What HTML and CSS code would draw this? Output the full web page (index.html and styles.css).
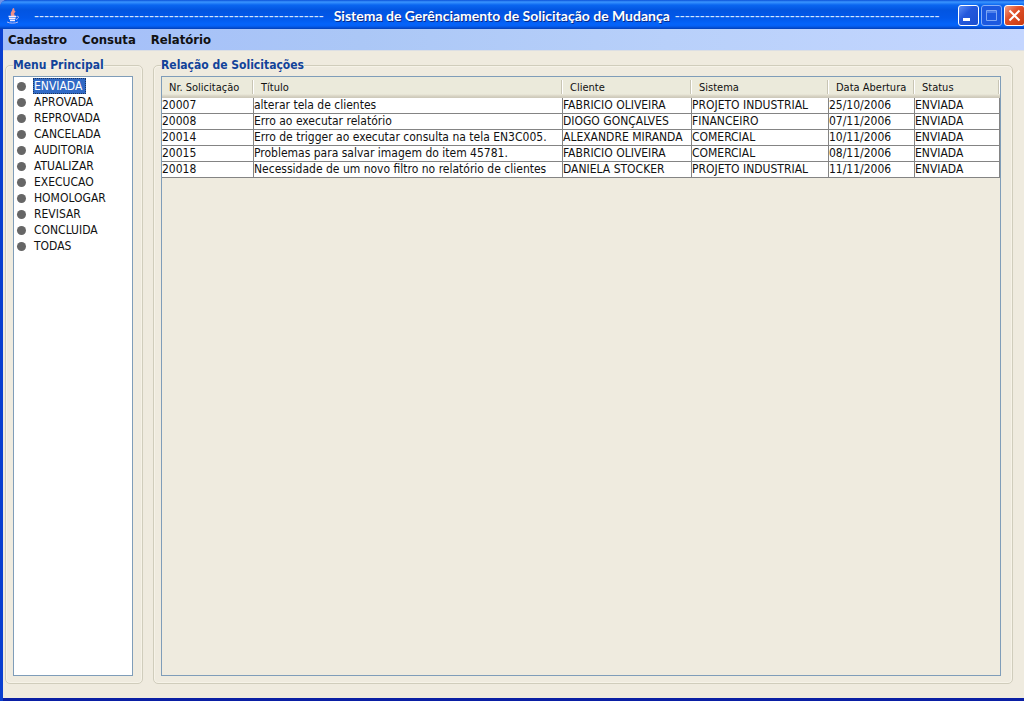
FILE: index.html
```html
<!DOCTYPE html>
<html lang="pt-BR">
<head>
<meta charset="utf-8">
<title>Sistema de Gerênciamento de Solicitação de Mudança</title>
<link rel="stylesheet" href="styles.css">
</head>
<body>
<div class="window">
  <header class="titlebar">
    <svg class="app-icon" viewBox="0 0 16 16" aria-hidden="true">
      <path d="M8 0.5C10 3 4.500 4.500 7.500 8M10 3C8 4.500 7.500 5.500 9 8" fill="none" stroke="#f09088" stroke-width="2"/>
      <path d="M3.500 8.500h7.500M4 10.500h6.500M5 12.500h5" stroke="#f4ecff" stroke-width="1.500" fill="none"/>
      <path d="M11.500 8.500c3-1 2.500 2-.5 3M2 14c3 1.500 8 1.500 11 0" stroke="#b9b8ee" fill="none"/>
    </svg>
    <span class="dashes dashes-left">----------------------------------------------------------</span>
    <h1 class="title">Sistema de Gerênciamento de Solicitação de Mudança</h1>
    <span class="dashes">-----------------------------------------------------</span>
    <div class="controls">
      <button class="control" type="button" aria-label="Minimizar"><svg viewBox="0 0 19 19"><path d="M4 12h7v3H4z" fill="#fff"/></svg></button>
      <button class="control control-dim" type="button" aria-label="Maximizar"><svg viewBox="0 0 19 19"><path d="M4.500 4.500h10v10h-10zM4 6h11" fill="none" stroke="#7fa8f5"/></svg></button>
      <button class="control control-close" type="button" aria-label="Fechar"><svg viewBox="0 0 19 19"><path d="M4.500 4.500l10 10M14.500 4.500l-10 10" stroke="#fff" stroke-width="2"/></svg></button>
    </div>
  </header>
  <div class="frame">
    <nav class="menubar">
      <button class="menu" type="button">Cadastro</button>
      <button class="menu" type="button">Consuta</button>
      <button class="menu" type="button">Relatório</button>
    </nav>
    <main class="content">
      <fieldset class="group group-menu">
        <legend class="group-title">Menu Principal</legend>
        <ul class="tree">
          <li class="node"><button class="node-label selected" type="button">ENVIADA</button></li>
          <li class="node"><button class="node-label" type="button">APROVADA</button></li>
          <li class="node"><button class="node-label" type="button">REPROVADA</button></li>
          <li class="node"><button class="node-label" type="button">CANCELADA</button></li>
          <li class="node"><button class="node-label" type="button">AUDITORIA</button></li>
          <li class="node"><button class="node-label" type="button">ATUALIZAR</button></li>
          <li class="node"><button class="node-label" type="button">EXECUCAO</button></li>
          <li class="node"><button class="node-label" type="button">HOMOLOGAR</button></li>
          <li class="node"><button class="node-label" type="button">REVISAR</button></li>
          <li class="node"><button class="node-label" type="button">CONCLUIDA</button></li>
          <li class="node"><button class="node-label" type="button">TODAS</button></li>
        </ul>
      </fieldset>
      <fieldset class="group group-list">
        <legend class="group-title">Relação de Solicitações</legend>
        <div class="table-pane">
          <table class="requests">
            <colgroup><col class="col-number"><col class="col-title"><col class="col-client"><col class="col-system"><col class="col-date"><col></colgroup>
            <thead>
              <tr><th scope="col">Nr. Solicitação</th><th scope="col">Título</th><th scope="col">Cliente</th><th scope="col">Sistema</th><th scope="col">Data Abertura</th><th scope="col">Status</th></tr>
            </thead>
            <tbody>
              <tr><td>20007</td><td>alterar tela de clientes</td><td>FABRICIO OLIVEIRA</td><td>PROJETO INDUSTRIAL</td><td>25/10/2006</td><td>ENVIADA</td></tr>
              <tr><td>20008</td><td>Erro ao executar relatório</td><td>DIOGO GONÇALVES</td><td>FINANCEIRO</td><td>07/11/2006</td><td>ENVIADA</td></tr>
              <tr><td>20014</td><td>Erro de trigger ao executar consulta na tela EN3C005.</td><td>ALEXANDRE MIRANDA</td><td>COMERCIAL</td><td>10/11/2006</td><td>ENVIADA</td></tr>
              <tr><td>20015</td><td>Problemas para salvar imagem do item 45781.</td><td>FABRICIO OLIVEIRA</td><td>COMERCIAL</td><td>08/11/2006</td><td>ENVIADA</td></tr>
              <tr><td>20018</td><td>Necessidade de um novo filtro no relatório de clientes</td><td>DANIELA STOCKER</td><td>PROJETO INDUSTRIAL</td><td>11/11/2006</td><td>ENVIADA</td></tr>
            </tbody>
          </table>
        </div>
      </fieldset>
    </main>
  </div>
</div>
</body>
</html>
```
FILE: styles.css
```css
* { box-sizing: border-box; }
body {
  margin: 0;
  background: #6f93e8;
  font-family: "DejaVu Sans Condensed", "DejaVu Sans", sans-serif;
  font-size: 12px;
  color: #111;
}
button { font: inherit; color: inherit; border: 0; padding: 0; background: none; }

.window {
  display: flex;
  flex-direction: column;
  min-height: 100vh;
  overflow: hidden;
  border-top-left-radius: 7px;
  background: linear-gradient(90deg, #0a3fd0 3px, #0a1fa4 3px);
}
.titlebar {
  display: flex;
  align-items: center;
  height: 29px;
  padding: 2px 0 0 5px;
  background: linear-gradient(#0a50d8 0, #3a95ff 2px, #0a66f0 5px, #0255e1 10px, #0258ea 18px, #0464fa 24px, #0560f4 26px, #0340b8 29px);
  color: #fff;
  white-space: nowrap;
}
.app-icon { width: 16px; height: 16px; flex: none; }
.title {
  margin: 0 5px 0 10px;
  font: bold 14px/20px Lato, sans-serif;
  text-shadow: 1px 1px 0 #0a2a88;
}
.dashes { font: 15px/20px "Liberation Sans", sans-serif; color: #d4e4ff; }
.dashes-left { margin-left: 13px; }
.controls { display: flex; gap: 2px; margin: 0 -1px 0 auto; }
.control {
  width: 21px;
  height: 21px;
  border: 1px solid #fff;
  border-radius: 3px;
  background: linear-gradient(135deg, #5d8ef5, #2458dc 40%, #1c4fd0);
}
.control svg { display: block; width: 19px; height: 19px; }
.control-dim { border-color: #86aef8; background: #1c59e0; }
.control-close { background: linear-gradient(135deg, #f0a088, #e0502a 40%, #c83a10); }

.frame {
  flex: 1;
  display: flex;
  flex-direction: column;
  margin: 0 0 3px 3px;
  background: #efebdf;
}
.menubar {
  display: flex;
  gap: 15px;
  height: 22px;
  padding: 0 5px;
  border-bottom: 1px solid #dcdfe4;
  background: linear-gradient(90deg, #a3bdfa, #abc7f6 35%, #b8d0fa 65%, #c4d6ff);
}
.menu { font-weight: bold; font-size: 13px; line-height: 21px; }

.content { flex: 1; display: flex; gap: 10px; padding: 6px 11px 14px 2px; }
.group {
  display: flex;
  flex-direction: column;
  min-width: 0;
  margin: 0;
  padding: 3px 9px 7px 7px;
  border: 1px solid #d0cdbc;
  border-radius: 5px;
  box-shadow: inset 0 0 0 1px #f6f3e8;
}
.group-menu { flex: 0 0 138px; }
.group-list { flex: 1; padding-right: 11px; }
.group-title {
  padding: 0;
  font-size: 12px;
  font-weight: bold;
  line-height: 16px;
  color: #12439a;
}
.tree {
  flex: 1;
  margin: 0;
  padding: 1px 0 0 3px;
  border: 1px solid #7f9db9;
  background: #fff;
  list-style: none;
}
.node { display: flex; align-items: center; gap: 7px; height: 16px; }
.node::before { content: ""; width: 9px; height: 9px; border-radius: 50%; background: #666; }
.node-label { padding: 0 1px; line-height: 16px; border: 0; }
.selected { padding-right: 4px; background: #316ac5; color: #fff; outline: 1px dotted #1b3560; outline-offset: -1px; }

.table-pane { flex: 1; border: 1px solid #7f9db9; }
.requests { width: 100%; table-layout: fixed; border-collapse: separate; border-spacing: 0; }
.col-number { width: 92px; }
.col-title { width: 309px; }
.col-client { width: 129px; }
.col-system { width: 137px; }
.col-date { width: 86px; }
.requests th {
  height: 21px;
  padding: 0 0 0 7px;
  font-size: 11px;
  font-weight: normal;
  text-align: left;
  white-space: nowrap;
  line-height: 16px;
  background: linear-gradient(90deg, #fff, #fff) right 0 top 3px / 1px 14px no-repeat, linear-gradient(90deg, #c8c5b4, #c8c5b4) right 1px top 3px / 1px 14px no-repeat, linear-gradient(#ebeadb 0, #ebeadb 17px, #d8d4c4 19px, #cbc7b8 21px);
}
.requests td {
  height: 16px;
  padding: 0;
  border-right: 1px solid #848484;
  border-bottom: 1px solid #848484;
  background: #fff;
  line-height: 15px;
  white-space: nowrap;
  overflow: hidden;
}
```
